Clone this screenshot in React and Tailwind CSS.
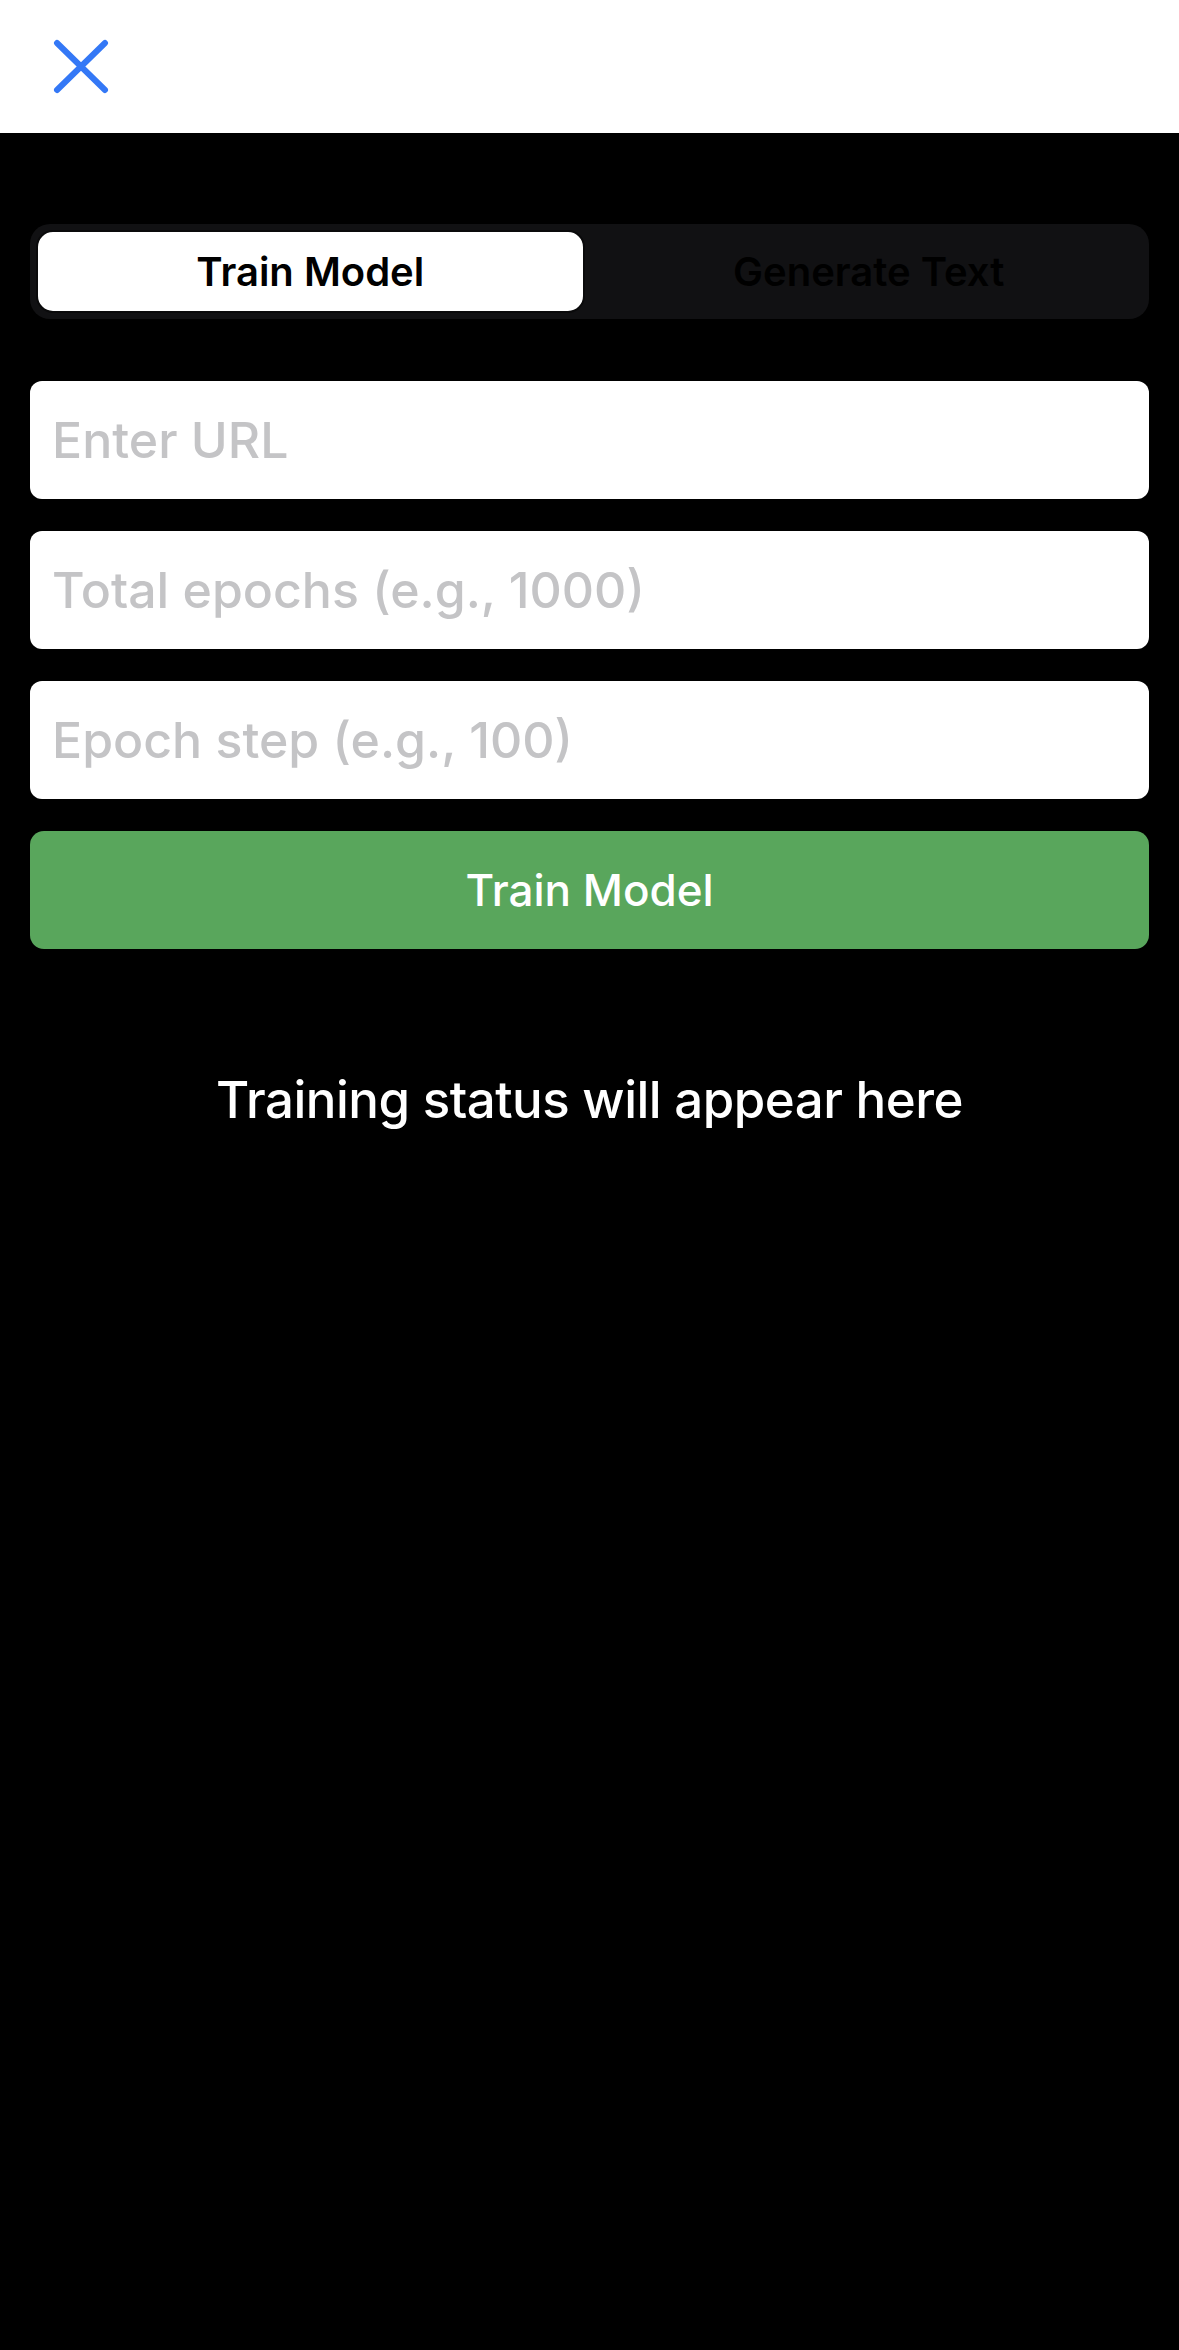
import React from "react";

export default function App() {
  return (
    <div
      className="min-h-[2350px] w-full bg-black"
      style={{ fontFamily: "Inter, 'Liberation Sans', sans-serif" }}
    >
      <header className="flex h-[133px] items-center bg-white pl-[52px]">
        <svg width="58" height="56" viewBox="0 0 58 56" fill="none">
          <path
            d="M5 4 L53 51 M53 4 L5 51"
            stroke="#3478f6"
            strokeWidth="6"
            strokeLinecap="round"
          />
        </svg>
      </header>

      <main className="px-[30px] pt-[91px]">
        <div className="grid h-[95px] grid-cols-2 gap-[10px] rounded-[20px] bg-[#111113] p-[6px]">
          <button className="flex items-center justify-center rounded-[17px] border-2 border-[#0a0a0b] bg-white text-[40px] font-semibold text-black">
            Train Model
          </button>
          <button className="flex items-center justify-center text-[40px] font-semibold text-black">
            Generate Text
          </button>
        </div>

        <div className="mt-[62px] flex flex-col gap-[32px]">
          <input
            placeholder="Enter URL"
            className="h-[118px] w-full rounded-[12px] bg-white px-[22px] text-[50px] font-medium text-black outline-none placeholder:text-[#c4c4c6]"
          />
          <input
            placeholder="Total epochs (e.g., 1000)"
            className="h-[118px] w-full rounded-[12px] bg-white px-[22px] text-[50px] font-medium text-black outline-none placeholder:text-[#c4c4c6]"
          />
          <input
            placeholder="Epoch step (e.g., 100)"
            className="h-[118px] w-full rounded-[12px] bg-white px-[22px] text-[50px] font-medium text-black outline-none placeholder:text-[#c4c4c6]"
          />
          <button className="flex h-[118px] w-full items-center justify-center rounded-[14px] bg-[#59a65c] text-[44px] font-medium text-white">
            Train Model
          </button>
        </div>

        <p className="mt-[120px] text-center text-[51px] font-medium leading-[62px] tracking-[-0.5px] text-white">
          Training status will appear here
        </p>
      </main>
    </div>
  );
}
